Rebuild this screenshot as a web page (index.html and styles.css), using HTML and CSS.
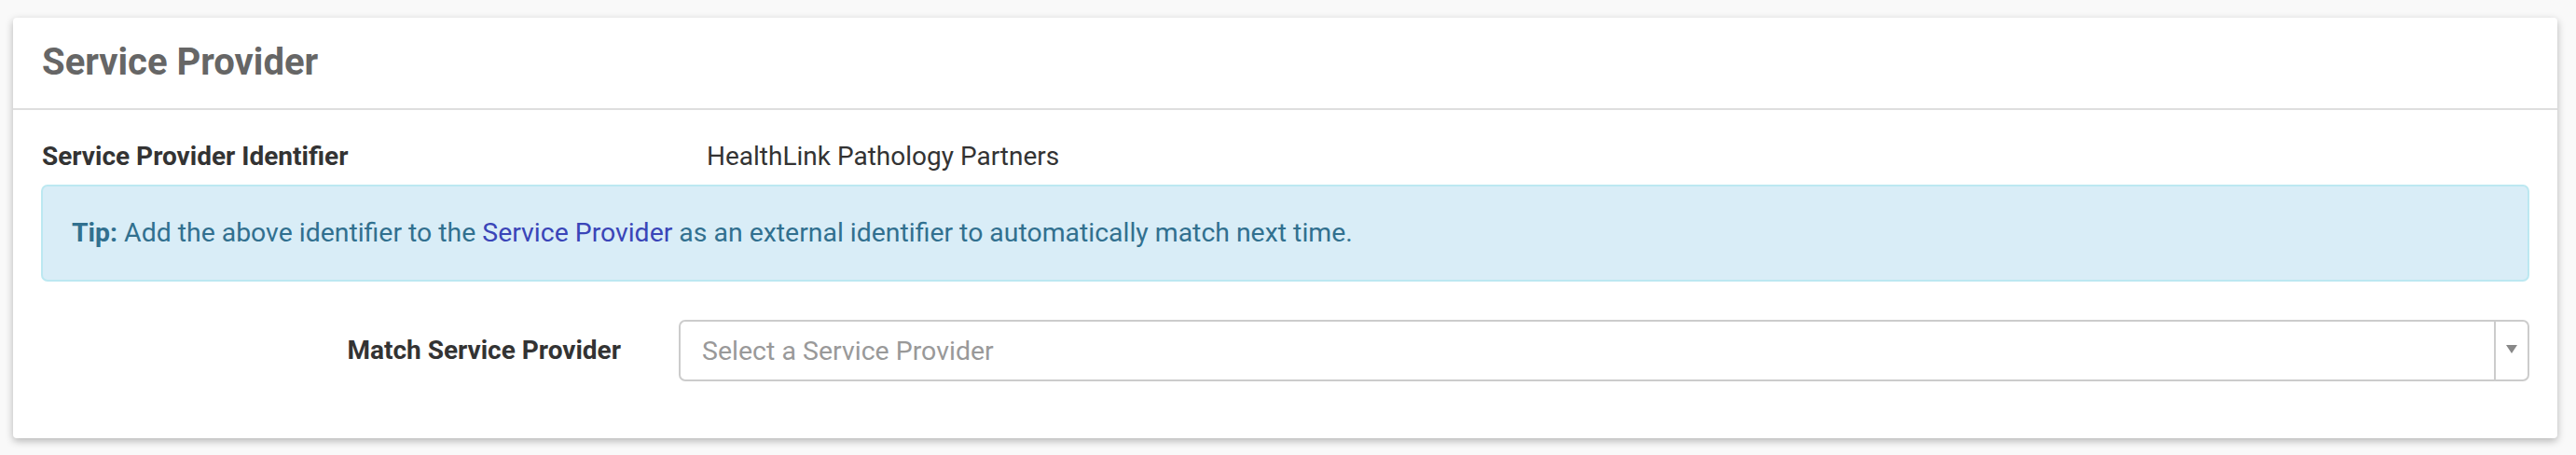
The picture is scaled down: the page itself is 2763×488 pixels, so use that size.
FILE: index.html
```html
<!DOCTYPE html>
<html>
<head>
<meta charset="utf-8">
<title>Service Provider</title>
<link rel="stylesheet" href="styles.css">
</head>
<body>
<div class="card">
  <div class="card-header">
    <h2 class="card-title">Service Provider</h2>
  </div>
  <div class="card-body">
    <div class="info-row">
      <div class="info-label">Service Provider Identifier</div>
      <div class="info-value">HealthLink Pathology Partners</div>
    </div>
    <div class="tip">
      <strong>Tip:</strong> Add the above identifier to the <a class="tip-link" href="#">Service Provider</a> as an external identifier to automatically match next time.
    </div>
    <div class="form-row">
      <label class="form-label">Match Service Provider</label>
      <div class="select">
        <span class="select-placeholder">Select a Service Provider</span>
        <span class="select-arrow"><span class="triangle"></span></span>
      </div>
    </div>
  </div>
</div>
</body>
</html>
```
FILE: styles.css
```css
html, body {
  margin: 0;
  padding: 0;
}
body {
  background: #f9f9f9;
  font-family: Roboto, "Liberation Sans", Arial, sans-serif;
  color: #333;
  padding: 19px 20px 0 14px;
  height: 488px;
  box-sizing: border-box;
}
.card {
  width: 2729px;
  height: 451px;
  box-sizing: border-box;
  background: #fff;
  border-radius: 4px;
  box-shadow: 0 3px 9px rgba(0, 0, 0, 0.28);
  display: flex;
  flex-direction: column;
}
.card-header {
  height: 99px;
  box-sizing: border-box;
  border-bottom: 2px solid #dedede;
  display: flex;
  align-items: center;
  padding: 0 31px;
}
.card-title {
  margin: 0;
  font-size: 40px;
  font-weight: 700;
  line-height: 49px;
  color: #666;
  position: relative;
  top: -1px;
}
.card-body {
  padding: 30px 30px 0 30px;
  display: flex;
  flex-direction: column;
}
.info-row {
  display: grid;
  grid-template-columns: 713px 1fr;
  height: 40px;
  line-height: 40px;
  font-size: 28px;
  padding-left: 1px;
}
.info-label {
  font-weight: 700;
  color: #333;
}
.info-value {
  color: #333;
}
.tip {
  margin-top: 10px;
  height: 104px;
  box-sizing: border-box;
  background: #d9edf7;
  border: 2px solid #bce8f1;
  border-radius: 7px;
  padding: 30px 30px;
  font-size: 28.4px;
  line-height: 40px;
  color: #31708f;
  padding-left: 31px;
}
.tip strong {
  font-weight: 700;
}
.tip-link {
  color: #3a45b8;
  text-decoration: none;
}
.form-row {
  margin-top: 41px;
  display: grid;
  grid-template-columns: 684px 1fr;
  align-items: center;
}
.form-label {
  font-size: 28px;
  font-weight: 700;
  color: #333;
  text-align: right;
  padding-right: 62px;
  line-height: 40px;
}
.select {
  height: 66px;
  box-sizing: border-box;
  border: 2px solid #cccccc;
  border-radius: 7px;
  display: flex;
  align-items: center;
}
.select-placeholder {
  flex: 1;
  padding-left: 23px;
  font-size: 28.5px;
  color: #999;
}
.select-arrow {
  width: 34px;
  height: 100%;
  border-left: 2px solid #cccccc;
  display: flex;
  align-items: center;
  justify-content: center;
}
.triangle {
  width: 0;
  height: 0;
  border-left: 6px solid transparent;
  border-right: 6px solid transparent;
  border-top: 9px solid #888;
  margin-top: -3px;
}
```
